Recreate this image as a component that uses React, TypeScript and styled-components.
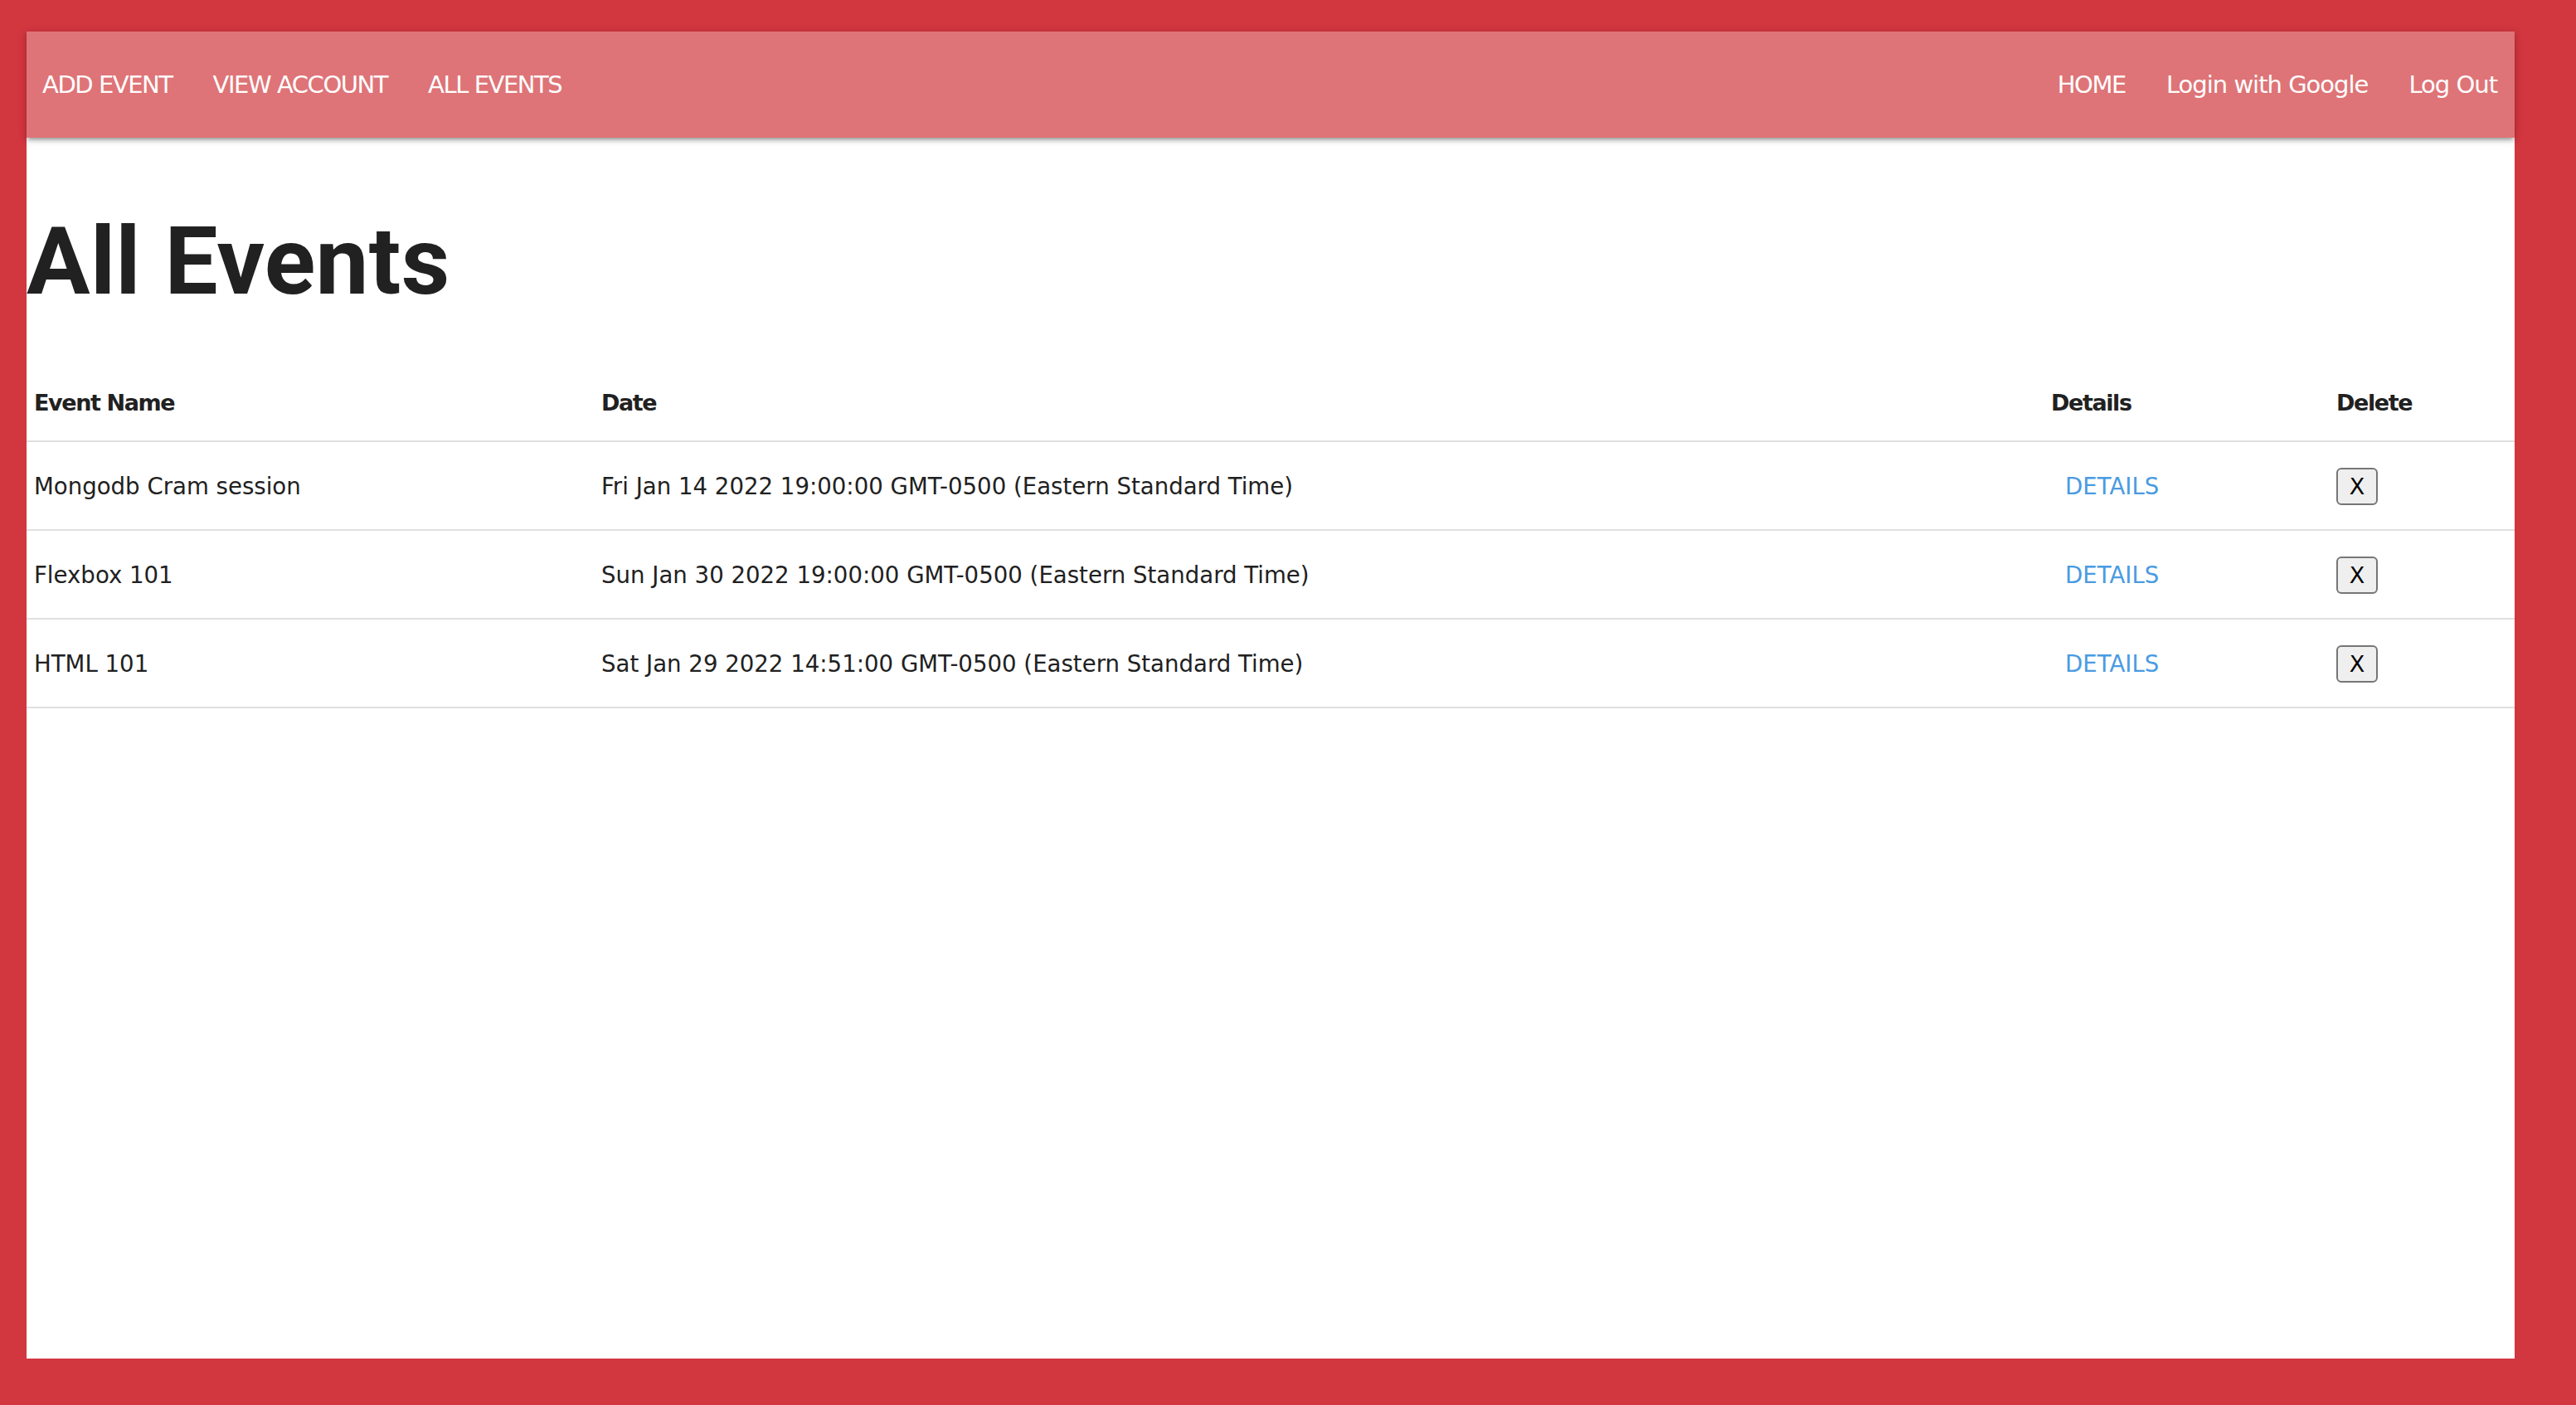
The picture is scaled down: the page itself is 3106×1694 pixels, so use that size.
import React from "react";
import styled, { createGlobalStyle } from "styled-components";

const GlobalStyle = createGlobalStyle`
  html, body {
    margin: 0;
    padding: 0;
  }
  body {
    background: #d2363f;
    font-family: "DejaVu Sans", "Liberation Sans", sans-serif;
    color: #212121;
  }
  * { box-sizing: border-box; }
`;

const Page = styled.div`
  min-height: 100vh;
  padding: 38px 74px 56px 32px;
  display: flex;
  flex-direction: column;
`;

const Card = styled.div`
  flex: 1;
  background: #ffffff;
  display: flex;
  flex-direction: column;
`;

const NavBar = styled.nav`
  position: relative;
  z-index: 1;
  height: 128px;
  background: #de7477;
  box-shadow: 0 4px 4px 0 rgba(0, 0, 0, 0.14), 0 6px 2px -4px rgba(0, 0, 0, 0.12),
    0 2px 10px 0 rgba(0, 0, 0, 0.2);
  display: flex;
  align-items: center;
  justify-content: space-between;
  padding: 0 21px 0 19px;
`;

const NavGroup = styled.ul`
  display: flex;
  align-items: center;
  gap: 49px;
  list-style: none;
  margin: 0;
  padding: 0;
`;

const NavLink = styled.a<{ $caps?: boolean }>`
  color: #ffffff;
  font-size: 29px;
  letter-spacing: ${(p) => (p.$caps ? "-1.45px" : "-1px")};
  text-decoration: none;
  line-height: 128px;
  white-space: nowrap;
`;

const Main = styled.main`
  display: flex;
  flex-direction: column;
`;

const Title = styled.h2`
  margin: 92px 0 64px;
  font-family: Roboto, "Liberation Sans", sans-serif;
  font-weight: 700;
  font-size: 114px;
  line-height: 1;
  letter-spacing: 0.3px;
  color: #212121;
`;

const Table = styled.table`
  width: 100%;
  border-collapse: collapse;
  table-layout: fixed;
`;

const Col = styled.col<{ $w?: number }>`
  width: ${(p) => (p.$w ? `${p.$w}px` : "auto")};
`;

const HeadCell = styled.th`
  text-align: left;
  font-weight: 700;
  font-size: 27px;
  letter-spacing: -1.4px;
  line-height: 40px;
  padding: 30px 9px 25px;
  border-bottom: 2px solid #e0e0e0;
  color: #212121;
`;

const Row = styled.tr`
  border-bottom: 2px solid #e0e0e0;
`;

const Cell = styled.td`
  font-size: 27.6px;
  line-height: 40px;
  padding: 31px 9px 29px;
  vertical-align: middle;
  color: #212121;
  white-space: nowrap;
`;

const DetailsLink = styled.a`
  color: #4a9be2;
  font-size: 27.6px;
  text-decoration: none;
  padding-left: 17px;
`;

const DeleteButton = styled.button`
  display: block;
  width: 50px;
  height: 45px;
  padding: 0;
  border: 2px solid #767676;
  border-radius: 6px;
  background: #efefef;
  color: #000000;
  font-family: "DejaVu Sans", sans-serif;
  font-size: 27px;
  line-height: 1;
`;

const events = [
  { name: "Mongodb Cram session", date: "Fri Jan 14 2022 19:00:00 GMT-0500 (Eastern Standard Time)" },
  { name: "Flexbox 101", date: "Sun Jan 30 2022 19:00:00 GMT-0500 (Eastern Standard Time)" },
  { name: "HTML 101", date: "Sat Jan 29 2022 14:51:00 GMT-0500 (Eastern Standard Time)" },
];

export default function App() {
  return (
    <>
      <GlobalStyle />
      <Page>
        <Card>
          <NavBar>
            <NavGroup>
              <li><NavLink $caps href="#">ADD EVENT</NavLink></li>
              <li><NavLink $caps href="#">VIEW ACCOUNT</NavLink></li>
              <li><NavLink $caps href="#">ALL EVENTS</NavLink></li>
            </NavGroup>
            <NavGroup>
              <li><NavLink $caps href="#">HOME</NavLink></li>
              <li><NavLink href="#">Login with Google</NavLink></li>
              <li><NavLink href="#">Log Out</NavLink></li>
            </NavGroup>
          </NavBar>
          <Main>
            <Title>All Events</Title>
            <Table>
              <colgroup>
                <Col $w={684} />
                <Col $w={1748} />
                <Col $w={344} />
                <Col />
              </colgroup>
              <thead>
                <tr>
                  <HeadCell>Event Name</HeadCell>
                  <HeadCell>Date</HeadCell>
                  <HeadCell>Details</HeadCell>
                  <HeadCell>Delete</HeadCell>
                </tr>
              </thead>
              <tbody>
                {events.map((ev) => (
                  <Row key={ev.name}>
                    <Cell>{ev.name}</Cell>
                    <Cell>{ev.date}</Cell>
                    <Cell>
                      <DetailsLink href="#">DETAILS</DetailsLink>
                    </Cell>
                    <Cell>
                      <DeleteButton>X</DeleteButton>
                    </Cell>
                  </Row>
                ))}
              </tbody>
            </Table>
          </Main>
        </Card>
      </Page>
    </>
  );
}
